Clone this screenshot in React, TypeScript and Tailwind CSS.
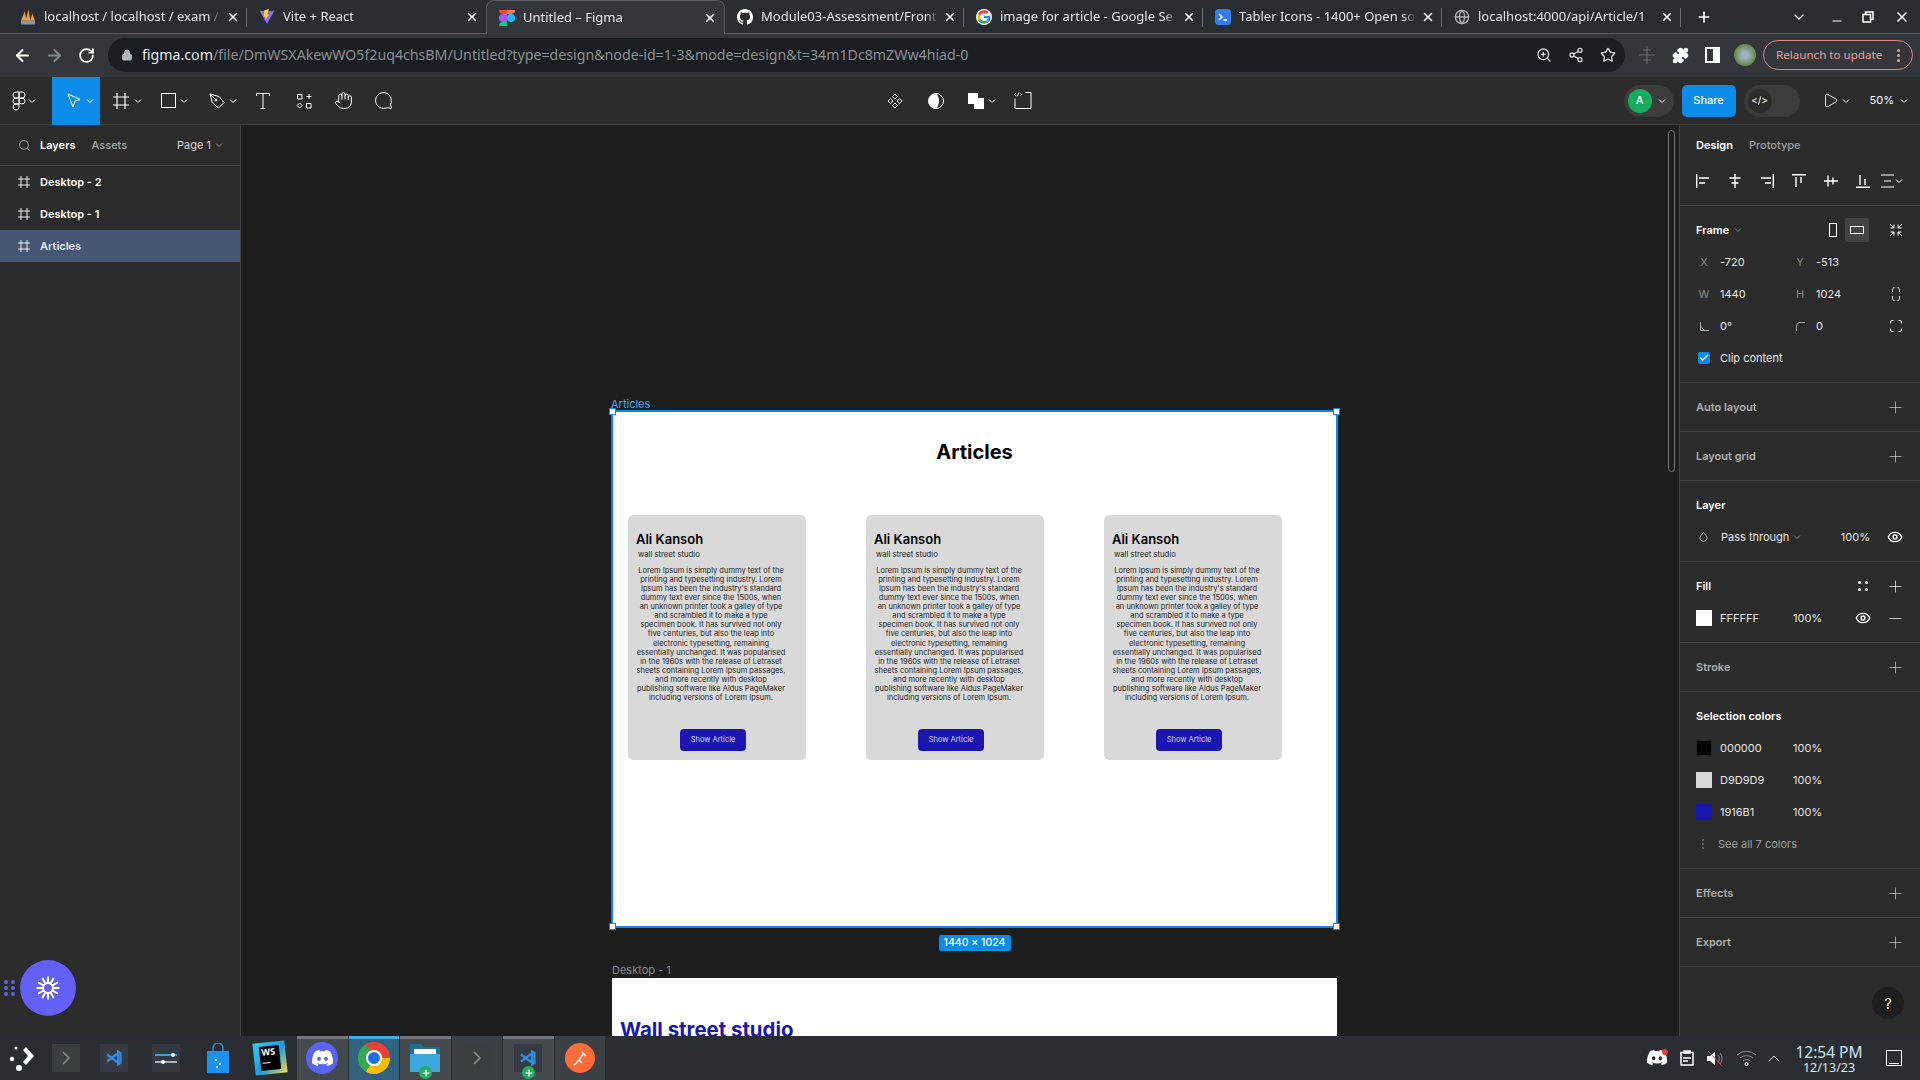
import React from 'react';
import { ArrowLeft, ArrowRight, RotateCw, Lock, ZoomIn, Share2, Star, Puzzle, Eye, Plus, Minus, Search, X, ChevronDown, Check, Globe, Hand, MessageCircle, Play } from 'lucide-react';

const inter = "font-['Inter',sans-serif]";

const Chev = ({ className = 'text-white' }: { className?: string }) => (
    <svg width="8" height="8" viewBox="0 0 8 8" fill="none" stroke="currentColor" className={className}><path d="M1 2.500l3 3 3-3" /></svg>
);

const FigmaLogo = () => (
    <svg width="16" height="24" viewBox="0 0 38 57">
        <path d="M19 28.500a9.500 9.500 0 1 1 19 0 9.500 9.500 0 0 1-19 0z" fill="#1ABCFE" />
        <path d="M0 47.500A9.500 9.500 0 0 1 9.500 38H19v9.500a9.500 9.500 0 1 1-19 0z" fill="#0ACF83" />
        <path d="M19 0v19h9.500a9.500 9.500 0 1 0 0-19H19z" fill="#FF7262" />
        <path d="M0 9.500A9.500 9.500 0 0 0 9.500 19H19V0H9.500A9.500 9.500 0 0 0 0 9.500z" fill="#F24E1E" />
        <path d="M0 28.500A9.500 9.500 0 0 0 9.500 38H19V19H9.500A9.500 9.500 0 0 0 0 28.500z" fill="#A259FF" />
    </svg>
);

const PmaIcon = () => (
    <svg width="17" height="18" viewBox="0 0 17 18">
        <path d="M1 13L5 3l2 10zM6 13l3-12 2 12zM11 13l2-8 3 8z" fill="#e9a23b" />
        <rect x="1" y="13" width="15" height="4" fill="#8a93a8" />
    </svg>
);

const ViteIcon = () => (
    <svg width="17" height="17" viewBox="0 0 17 17">
        <path d="M0.500 2L8.500 16.500 16.500 2 8.500 3.500z" fill="#8f6cf5" />
        <path d="M10.500 0.500L5.500 2l-.5 7 2-.5-.5 3.500L11 6l-2 .3z" fill="#ffd23f" />
    </svg>
);

const GithubIcon = () => (
    <svg width="16" height="16" viewBox="0 0 16 16" fill="#fff">
        <path d="M8 0C3.580 0 0 3.580 0 8c0 3.540 2.290 6.530 5.470 7.590.4.070.55-.17.550-.38 0-.19-.01-.82-.01-1.490-2.010.37-2.530-.49-2.690-.94-.09-.23-.48-.94-.82-1.130-.28-.15-.68-.52-.01-.53.63-.01 1.080.58 1.230.82.72 1.210 1.870.87 2.330.66.070-.52.28-.87.51-1.070-1.780-.2-3.640-.89-3.640-3.950 0-.87.31-1.590.82-2.150-.08-.2-.36-1.020.08-2.120 0 0 .67-.21 2.200.82.64-.18 1.320-.27 2-.27s1.360.09 2 .27c1.530-1.040 2.200-.82 2.200-.82.44 1.100.16 1.920.08 2.120.51.560.82 1.270.82 2.150 0 3.070-1.870 3.750-3.650 3.950.29.250.54.730.54 1.480 0 1.070-.01 1.930-.01 2.200 0 .21.150.46.550.38A8.010 8.010 0 0 0 16 8c0-4.420-3.580-8-8-8z" />
    </svg>
);

const GoogleIcon = () => (
    <svg width="16" height="16" viewBox="0 0 48 48">
        <path fill="#fff" d="M24 0a24 24 0 1 0 0 48 24 24 0 0 0 0-48z" />
        <path fill="#EA4335" d="M24 12c3.200 0 5.900 1.100 8 3l6-6C34.400 5.700 29.600 4 24 4 16.200 4 9.500 8.500 6.200 15l7 5.400C14.800 15.500 19 12 24 12z" />
        <path fill="#4285F4" d="M43.500 24.500c0-1.500-.1-2.900-.4-4.500H24v8h11c-.5 2.700-2 4.800-4.300 6.300l6.800 5.300c4-3.700 6-9.100 6-14.800z" />
        <path fill="#FBBC05" d="M13.200 28.400a12 12 0 0 1 0-8L6.200 15a20 20 0 0 0 0 18z" />
        <path fill="#34A853" d="M24 44c5.500 0 10-1.800 13.500-4.500l-6.800-5.300c-1.800 1.300-4 2-6.700 2-5 0-9.200-3.400-10.800-7.800l-7 5.400C9.500 39.500 16.200 44 24 44z" />
    </svg>
);

const TablerIcon = () => (
    <svg width="16" height="16" viewBox="0 0 16 16">
        <rect width="16" height="16" rx="3.500" fill="#2d7ff0" />
        <path d="M4 5l3 3-3 3" stroke="#fff" strokeWidth="1.500" fill="none" />
        <path d="M8.500 11h3.500" stroke="#fff" strokeWidth="1.500" />
    </svg>
);

const tabs = [
    { title: 'localhost / localhost / exam /', icon: <PmaIcon /> },
    { title: 'Vite + React', icon: <ViteIcon /> },
    { title: 'Untitled – Figma', icon: <FigmaLogo />, active: true },
    { title: 'Module03-Assessment/Front', icon: <GithubIcon /> },
    { title: 'image for article - Google Se', icon: <GoogleIcon /> },
    { title: 'Tabler Icons - 1400+ Open so', icon: <TablerIcon /> },
    { title: 'localhost:4000/api/Article/1', icon: <Globe size={16} className="text-[#aeb1b5]" /> },
];

const TabStrip = () => (
    <div className="flex h-[34px] items-end border-b border-[#5a5d61] bg-[#2a2d32] pl-2 text-[13px] text-[#e4e6e8]">
        {tabs.map((t, i) => (
            <div
                key={t.title}
                className={`relative flex h-[33px] w-[239px] shrink-0 items-center pl-3 pr-[7px] ${t.active ? '-mb-px h-[34px] rounded-t-lg border border-b-0 border-[#5a5d61] bg-[#33363b]' : ''}`}
            >
                <span className="flex h-4 w-4 shrink-0 items-center justify-center overflow-hidden">{t.icon}</span>
                <span className="ml-2 flex-1 whitespace-nowrap [mask-image:linear-gradient(to_right,black_93%,transparent)]">{t.title}</span>
                <X size={14} strokeWidth={2.500} className="ml-[5px] shrink-0 text-white" />
                {!t.active && i !== 1 && <span className="absolute top-2 right-0 h-[19px] w-px bg-[#6b6e72]" />}
            </div>
        ))}
        <div className="flex h-[33px] flex-1 items-center">
            <Plus size={16} strokeWidth={2.500} className="ml-[15px] text-white" />
            <ChevronDown size={16} strokeWidth={2} className="ml-[79px] text-white" />
            <Minus size={14} strokeWidth={2} className="ml-[23px] mt-2 text-white" />
            <svg width="12" height="12" viewBox="0 0 12 12" fill="none" stroke="#fff" strokeWidth="1.500" className="ml-[18px]"><path d="M3.500 3V1h7.500v7.500H9M1 3.500h7.500V11H1z" /></svg>
            <X size={16} strokeWidth={2.500} className="ml-[20px] text-white" />
        </div>
    </div>
);

const AddressBar = () => (
    <div className="flex h-[43px] items-center bg-[#33363b] pb-px">
        <ArrowLeft size={19} strokeWidth={2.500} className="ml-[13px] text-white" />
        <ArrowRight size={19} strokeWidth={2.500} className="ml-[13px] text-[#85888c]" />
        <RotateCw size={17} strokeWidth={2.500} className="ml-[14px] text-white" />
        <div className="ml-[13px] flex h-[34px] w-[1517px] items-center rounded-full bg-[#1b1e22] pl-[13px] pr-[9px] text-[14.200px]">
            <Lock size={12} className="fill-[#b3b5b8] text-[#b3b5b8]" />
            <span className="ml-[9px] text-[#e8eaed]">figma.com</span>
            <span className="text-[#8d9094]">/file/DmWSXAkewWO5f2uq4chsBM/Untitled?type=design&amp;node-id=1-3&amp;mode=design&amp;t=34m1Dc8mZWw4hiad-0</span>
            <div className="ml-auto flex items-center gap-[16px] text-[#d4d6d9]">
                <ZoomIn size={16} />
                <Share2 size={16} />
                <Star size={16} />
            </div>
        </div>
        <svg width="16" height="18" viewBox="0 0 16 18" fill="none" stroke="#6d7074" className="ml-[14px]"><path d="M8 0v18M0 9h16M4 4h8M4 14h8" /></svg>
        <Puzzle size={17} className="ml-[17px] fill-white text-white" />
        <span className="ml-[16px] h-[16px] w-[15px] border-2 border-r-[7px] border-white" />
        <span className="ml-[14px] h-[22px] w-[22px] rounded-full bg-[radial-gradient(circle,#9eb2c4_20%,#5f8a42_70%)]" />
        <div className="ml-[7px] flex h-[30px] w-[150px] items-center whitespace-nowrap rounded-full border border-[#d98a80] pl-[12px] pr-[12px] text-[11.600px] text-[#f0a096]">
            Relaunch to update
            <span className="ml-auto flex flex-col gap-[2px]">
                <i className="h-[3px] w-[3px] rounded-full bg-[#f0a096]" />
                <i className="h-[3px] w-[3px] rounded-full bg-[#f0a096]" />
                <i className="h-[3px] w-[3px] rounded-full bg-[#f0a096]" />
            </span>
        </div>
    </div>
);

const FrameIcon = ({ size = 16 }: { size?: number }) => (
    <svg width={size} height={size} viewBox="0 0 16 16" fill="none" stroke="#fff" strokeWidth="1.200"><path d="M4 0v16M12 0v16M0 4h16M0 12h16" /></svg>
);

const Toolbar = () => (
    <div className={`flex h-12 items-center border-b border-[#444] bg-[#2c2c2c] text-white ${inter}`}>
        <div className="flex w-[52px] items-center pl-[12px]">
            <svg width="14" height="20" viewBox="0 0 14 20" fill="none" stroke="#fff"><path d="M7 1H4a3 3 0 0 0 0 6h3zM7 1h3a3 3 0 0 1 0 6H7zM7 7H4a3 3 0 0 0 0 6h3zM7 10a3 3 0 1 0 6 0 3 3 0 0 0-6 0zM7 13H4a3 3 0 1 0 3 3z" /></svg>
            <Chev className="ml-[2px] text-white" />
        </div>
        <div className="flex h-12 w-12 items-center bg-[#0c8ce9] pl-[15px]">
            <svg width="14" height="16" viewBox="0 0 14 16" fill="none" stroke="#fff"><path d="M1 1l12 5.500-5 1.500-2 6z" /></svg>
            <Chev className="ml-[5px] text-white" />
        </div>
        <div className="ml-[13px] flex items-center"><FrameIcon /><Chev className="ml-[5px]" /></div>
        <div className="ml-[19px] flex items-center"><span className="h-[15px] w-[15px] border border-white" /><Chev className="ml-[4px]" /></div>
        <div className="ml-[21px] flex items-center">
            <svg width="16" height="16" viewBox="0 0 16 16" fill="none" stroke="#fff"><path d="M1 1l9 2.500 5 6-5.500 5.500-6-5zM1 1l5.500 5.500" /><circle cx="7" cy="7" r="1" /></svg>
            <Chev className="ml-[4px]" />
        </div>
        <svg width="14" height="16" viewBox="0 0 14 16" fill="none" stroke="#fff" className="ml-[19px]"><path d="M.5 3V.5h13V3M7 .5v15M4.500 15.500h5" /></svg>
        <svg width="16" height="16" viewBox="0 0 16 16" fill="none" stroke="#fff" className="ml-[26px]"><path d="M1.500 1.500h4.500v4.500H1.500zM10.500 3.500h5M13 1v5M3.700 10l2.500 2.500-2.500 2.500-2.500-2.500zM10.500 10.500h4.500v4.500h-4.500z" /></svg>
        <Hand size={19} strokeWidth={1.250} className="ml-[22px]" />
        <MessageCircle size={19} strokeWidth={1.250} className="ml-[21px] -scale-x-100" />
        <svg width="16" height="16" viewBox="0 0 16 16" fill="none" stroke="#fff" className="ml-[494px]"><path d="M8 1l2.500 2.500L8 6 5.500 3.500zM8 10l2.500 2.500L8 15l-2.500-2.500zM3.500 5.500L6 8l-2.500 2.500L1 8zM12.500 5.500L15 8l-2.500 2.500L10 8z" /></svg>
        <svg width="16" height="16" viewBox="0 0 16 16" className="ml-[25px]"><circle cx="8" cy="8" r="7.500" fill="none" stroke="#fff" /><path d="M8 .5a7.500 7.500 0 0 0 0 15c2-2 3-4.500 3-7.500S10 2.500 8 .5z" fill="#fff" /></svg>
        <svg width="16" height="16" viewBox="0 0 16 16" fill="#fff" className="ml-[24px]"><path d="M0 0h10v5h6v11H6v-5H0z" /></svg>
        <Chev className="ml-[4px]" />
        <svg width="18" height="19" viewBox="0 0 18 19" fill="none" stroke="#fff" className="ml-[18px]"><path d="M11.500 1.500H17v16H1v-10" /><path d="M1 3l-1 1 1 1M6 3l1 1-1 1M4.500 2L2.500 6" transform="translate(.5 -.5)" /></svg>
        <div className="ml-auto mr-[8px] flex h-8 w-[50px] items-center rounded-full bg-[#3c3c3c] pl-1">
            <span className="flex h-6 w-6 items-center justify-center rounded-full bg-[#14ae5c] text-[11px] font-medium">A</span>
            <Chev className="ml-[6px]" />
        </div>
        <div className="flex h-8 w-[54px] items-center justify-center rounded-[5px] bg-[#0c8ce9] text-[11px] font-medium">Share</div>
        <div className="ml-2 flex h-8 w-14 items-center rounded-full bg-[#3c3c3c] pl-1">
            <span className="flex h-6 w-6 items-center justify-center rounded-full bg-[#2c2c2c] text-[10px]">&lt;/&gt;</span>
        </div>
        <Play size={17} strokeWidth={1.250} className="ml-[22px]" />
        <Chev className="ml-[3px]" />
        <span className="ml-[20px] text-[11px]">50%</span>
        <Chev className="ml-[6px] mr-[12px]" />
    </div>
);

const LeftPanel = () => (
    <aside className={`relative flex w-[241px] shrink-0 flex-col border-r border-[#444] bg-[#2c2c2c] text-[11px] text-white ${inter}`}>
        <div className="flex h-[41px] shrink-0 items-center border-b border-[#444] pl-[18px] pr-[17px]">
            <Search size={13} className="text-[#8c8c8c]" />
            <span className="ml-[9px] font-semibold">Layers</span>
            <span className="ml-[16px] font-medium text-[#a8a8a8]">Assets</span>
            <span className="ml-auto text-[#d6d6d6]">Page 1</span>
            <Chev className="ml-1 text-[#999]" />
        </div>
        {['Desktop - 2', 'Desktop - 1', 'Articles'].map((name) => (
            <div key={name} className={`flex h-8 shrink-0 items-center pl-[18px] font-semibold ${name === 'Articles' ? 'bg-[#465775] text-[#e6ebf2]' : ''}`}>
                <FrameIcon size={12} />
                <span className="ml-[10px]">{name}</span>
            </div>
        ))}
        <div className="absolute top-[855px] left-[4px] grid grid-cols-2 gap-x-[3px] gap-y-[2px]">
            {[0, 1, 2, 3, 4, 5].map((d) => <i key={d} className="h-1 w-1 rounded-full bg-[#6360f0]" />)}
        </div>
        <div className="absolute top-[835px] left-[20px] flex h-14 w-14 items-center justify-center rounded-full bg-[#6360f7]">
            <svg width="24" height="24" viewBox="0 0 24 24" stroke="#fff" strokeWidth="2" fill="none">
                {[0, 30, 60, 90, 120, 150, 180, 210, 240, 270, 300, 330].map((a) => (
                    <path key={a} d="M12 0.500V7.500" transform={`rotate(${a} 12 12)`} />
                ))}
                <circle cx="12" cy="12" r="5" />
            </svg>
        </div>
    </aside>
);

const bodyLines = [
    'Lorem Ipsum is simply dummy text of the',
    'printing and typesetting industry. Lorem',
    "Ipsum has been the industry's standard",
    'dummy text ever since the 1500s, when',
    'an unknown printer took a galley of type',
    'and scrambled it to make a type',
    'specimen book. It has survived not only',
    'five centuries, but also the leap into',
    'electronic typesetting, remaining',
    'essentially unchanged. It was popularised',
    'in the 1960s with the release of Letraset',
    'sheets containing Lorem Ipsum passages,',
    'and more recently with desktop',
    'publishing software like Aldus PageMaker',
    'including versions of Lorem Ipsum.',
];

const ArticleCard = () => (
    <div className="flex h-[245px] w-[178px] shrink-0 flex-col rounded-[5px] bg-[#d9d9d9] pl-2 text-black">
        <div className="mt-[15px] text-[13px] font-semibold leading-[18px]">Ali Kansoh</div>
        <div className="mt-[1px] pl-[2px] text-[7.700px] leading-[12px] text-[#222]">wall street studio</div>
        <div className="mt-[5px] w-[150px] text-center text-[7.500px] leading-[9.060px] whitespace-nowrap text-[#222]">
            {bodyLines.map((line) => <div key={line}>{line}</div>)}
        </div>
        <div className="mt-auto mb-[9px] ml-[44px] flex h-[22px] w-[66px] items-center justify-center rounded-[4px] bg-[#1916b1] pb-px text-[7.500px] text-[#d8d8f5]">Show Article</div>
    </div>
);

const Handle = ({ className }: { className: string }) => (
    <span className={`absolute h-[7px] w-[7px] border border-[#0c8ce9] bg-white ${className}`} />
);

const Canvas = () => (
    <main className={`relative flex min-w-0 flex-1 flex-col overflow-hidden bg-[#1e1e1e] pl-[370px] ${inter}`}>
        <div className="mt-[272px] h-[13px] text-[11px] leading-[14px] text-[#4da6e8]">Articles</div>
        <section className="relative h-[518px] w-[727px] shrink-0 border-2 border-[#0c8ce9] bg-white">
            <div className="mt-[26px] text-center text-[20px] font-bold leading-[28px] text-black">Articles</div>
            <div className="mt-[49px] flex gap-[60px] pl-[15px]">
                <ArticleCard />
                <ArticleCard />
                <ArticleCard />
            </div>
            <Handle className="-top-[4px] -left-[4px]" />
            <Handle className="-top-[4px] -right-[4px]" />
            <Handle className="-bottom-[4px] -left-[4px]" />
            <Handle className="-right-[4px] -bottom-[4px]" />
        </section>
        <div className="mt-[7px] flex h-[16px] w-[727px] shrink-0 justify-center">
            <span className="h-[16px] w-[72px] rounded-[2px] bg-[#0c8ce9] text-center text-[10.500px] leading-[16px] font-medium text-white">1440 × 1024</span>
        </div>
        <div className="mt-[12px] h-[15px] pl-px text-[11px] leading-[15px] text-[#8c8c8c]">Desktop - 1</div>
        <section className="ml-px h-[100px] w-[725px] shrink-0 bg-white pl-[8px] pt-[38px]">
            <div className="text-[20.400px] leading-[28px] font-bold text-[#1916b1]">Wall street studio</div>
        </section>
        <span className="absolute top-[5px] right-[4px] h-[342px] w-[7px] rounded-[4px] border border-[#777] bg-[#1e1e1e]" />
    </main>
);

const PanelPlus = ({ className }: { className: string }) => <Plus size={19} strokeWidth={0.900} className={className} />;

const Section = ({ title }: { title: string }) => (
    <div className="border-b border-[#444]">
        <div className="my-2 flex h-8 items-center justify-between pl-4 pr-[15px]">
            <span className="font-semibold text-[#b0b0b0]">{title}</span>
            <PanelPlus className="text-[#d0d0d0]" />
        </div>
    </div>
);

const AlignIcon = ({ d }: { d: string }) => (
    <span className="flex w-8 justify-center">
        <svg width="14" height="14" viewBox="0 0 14 14" fill="none" stroke="#fff" strokeWidth="1.400"><path d={d} /></svg>
    </span>
);

const Prop = ({ label, value }: { label: React.ReactNode; value: string }) => (
    <div className="flex items-center">
        <span className="w-6 text-center text-[#8c8c8c]">{label}</span>
        <span className="ml-1">{value}</span>
    </div>
);

const ColorRow = ({ color, value, border }: { color: string; value: string; border?: string }) => (
    <div className="flex h-8 items-center pl-4">
        <span className={`h-4 w-4 ${border ?? ''}`} style={{ backgroundColor: color }} />
        <span className="ml-2 w-[73px] text-[#e6e6e6]">{value}</span>
        <span className="text-[#e6e6e6]">100%</span>
    </div>
);

const RightPanel = () => (
    <aside className={`relative w-[241px] shrink-0 border-l border-[#444] bg-[#2c2c2c] text-[11px] text-[#e6e6e6] ${inter}`}>
        <div className="h-[81px] border-b border-[#444]">
            <div className="flex h-10 items-center pl-4">
                <span className="font-semibold text-white">Design</span>
                <span className="ml-4 font-medium text-[#a0a0a0]">Prototype</span>
            </div>
            <div className="flex h-[32px] items-center pl-[7px]">
                <AlignIcon d="M.7 0v14M3 4h10M3 9h6" />
                <AlignIcon d="M7 0v14M1.500 4h11M3.500 9h7" />
                <AlignIcon d="M13.300 0v14M1 4h10M5 9h6" />
                <AlignIcon d="M0 .7h14M4 3v10M9 3v6" />
                <AlignIcon d="M0 7h14M4 1.500v11M9 3.500v7" />
                <AlignIcon d="M0 13.300h14M4 1v10M9 5v6" />
                <span className="ml-[2px] flex items-center">
                    <svg width="14" height="14" viewBox="0 0 14 14" fill="none" stroke="#fff" strokeWidth="1.200"><path d="M0 1h13M0 13h13M3 7h7" /></svg>
                    <Chev className="text-white" />
                </span>
            </div>
        </div>
        <div className="h-[177px] border-b border-[#444]">
            <div className="-mb-2 flex h-[48px] items-center pl-4 pr-[17px]">
                <span className="font-semibold text-white">Frame</span>
                <Chev className="ml-[5px] text-[#8c8c8c]" />
                <span className="ml-auto mr-[8px] h-[14px] w-[8px] border border-white" />
                <span className="flex h-6 w-6 items-center justify-center rounded-[2px] bg-[#444]"><span className="h-[8px] w-[14px] border border-white" /></span>
                <svg width="14" height="14" viewBox="0 0 14 14" fill="none" stroke="#fff" className="ml-[20px]"><path d="M1 1l4 4M5 1.500V5H1.500M13 1L9 5M9 1.500V5h3.500M1 13l4-4M5 12.500V9H1.500M13 13L9 9M9 12.500V9h3.500" /></svg>
            </div>
            <div className="grid grid-cols-[96px_96px_24px] pl-3">
                <div className="flex h-8 items-center"><Prop label="X" value="-720" /></div>
                <div className="flex h-8 items-center"><Prop label="Y" value="-513" /></div>
                <div />
                <div className="flex h-8 items-center"><Prop label="W" value="1440" /></div>
                <div className="flex h-8 items-center"><Prop label="H" value="1024" /></div>
                <div className="flex h-8 items-center justify-center">
                    <svg width="8" height="14" viewBox="0 0 8 14" fill="none" stroke="#ddd"><path d="M.5 5V3a3.500 3.500 0 0 1 7 0v2M.5 9v2a3.500 3.500 0 0 0 7 0V9" /></svg>
                </div>
                <div className="flex h-8 items-center"><Prop label={<svg width="9" height="9" viewBox="0 0 9 9" fill="none" stroke="#aaa" className="mx-auto"><path d="M.5 0v8.500H9M.5 4l4 4.500" /></svg>} value="0°" /></div>
                <div className="flex h-8 items-center"><Prop label={<svg width="9" height="9" viewBox="0 0 9 9" fill="none" stroke="#aaa" className="mx-auto"><path d="M.5 9V4A3.500 3.500 0 0 1 4 .5h5" /></svg>} value="0" /></div>
                <div className="flex h-8 items-center justify-center">
                    <svg width="12" height="12" viewBox="0 0 12 12" fill="none" stroke="#ddd"><path d="M.5 3.500V2A1.500 1.500 0 0 1 2 .5h1.500M8.500.5H10A1.500 1.500 0 0 1 11.500 2v1.500M11.500 8.500V10a1.500 1.500 0 0 1-1.500 1.500H8.500M3.500 11.500H2A1.500 1.500 0 0 1 .5 10V8.500" /></svg>
                </div>
            </div>
            <div className="flex h-8 items-center pl-[18px]">
                <span className="flex h-3 w-3 items-center justify-center rounded-[2px] bg-[#0c8ce9]"><Check size={10} strokeWidth={3} className="text-white" /></span>
                <span className="ml-[10px]">Clip content</span>
            </div>
        </div>
        <Section title="Auto layout" />
        <Section title="Layout grid" />
        <div className="h-[81px] border-b border-[#444]">
            <div className="-mb-2 flex h-[48px] items-center pl-4 font-semibold text-white">Layer</div>
            <div className="flex h-8 items-center pl-[19px] pr-[17px]">
                <svg width="9" height="11" viewBox="0 0 9 11" fill="none" stroke="#aaa"><path d="M4.500 .5l2.500 3a3.500 3.500 0 1 1-5 0z" /></svg>
                <span className="ml-[13px]">Pass through</span>
                <Chev className="ml-1 text-[#8c8c8c]" />
                <span className="ml-auto">100%</span>
                <Eye size={16} className="ml-[17px] text-white" />
            </div>
        </div>
        <div className="h-[81px] border-b border-[#444]">
            <div className="-mb-2 flex h-[48px] items-center pl-4 pr-[15px] font-semibold text-white">
                Fill
                <span className="ml-auto mr-[18px] grid grid-cols-2 gap-[4px]">
                    {[0, 1, 2, 3].map((d) => <i key={d} className="h-[3px] w-[3px] rounded-full bg-white" />)}
                </span>
                <PanelPlus className="text-white" />
            </div>
            <div className="flex h-8 items-center pl-4 pr-[15px]">
                <span className="h-4 w-4 bg-white" />
                <span className="ml-2 w-[73px]">FFFFFF</span>
                <span>100%</span>
                <Eye size={16} className="ml-auto mr-[15px] text-white" />
                <Minus size={19} strokeWidth={0.900} className="text-white" />
            </div>
        </div>
        <Section title="Stroke" />
        <div className="h-[177px] border-b border-[#444]">
            <div className="-mb-2 flex h-[48px] items-center pl-4 font-semibold text-white">Selection colors</div>
            <ColorRow color="#000000" value="000000" border="border border-[#222]" />
            <ColorRow color="#D9D9D9" value="D9D9D9" />
            <ColorRow color="#1916B1" value="1916B1" />
            <div className="flex h-8 items-center pl-[22px] text-[#a0a0a0]">
                <span className="flex flex-col gap-[2px]">
                    <i className="h-[2px] w-[2px] bg-[#666]" /><i className="h-[2px] w-[2px] bg-[#666]" /><i className="h-[2px] w-[2px] bg-[#666]" />
                </span>
                <span className="ml-[14px]">See all 7 colors</span>
            </div>
        </div>
        <Section title="Effects" />
        <Section title="Export" />
        <span className="absolute right-4 bottom-[17px] flex h-8 w-8 items-center justify-center rounded-full bg-[#1e1e1e] text-[14px] text-white">?</span>
    </aside>
);

const DiscordGlyph = ({ size }: { size: number }) => (
    <svg width={size} height={size * 0.76} viewBox="0 0 127 96" fill="#fff">
        <path d="M107.700 8A105 105 0 0 0 81.500 0c-1.100 2-2.400 4.800-3.300 7a97.700 97.700 0 0 0-29.100 0c-.9-2.200-2.300-5-3.400-7a105 105 0 0 0-26.200 8C3 32.700-1.500 56.800.7 80.500A105.700 105.700 0 0 0 32.800 96.700c2.600-3.500 4.900-7.200 6.900-11.100-3.800-1.400-7.400-3.200-10.900-5.200.9-.7 1.800-1.400 2.700-2.100a75.600 75.600 0 0 0 64.300 0c.9.700 1.800 1.400 2.700 2.100-3.500 2-7.100 3.800-10.900 5.200 2 3.900 4.300 7.600 6.900 11.100a105.300 105.300 0 0 0 32.200-16.200c2.600-27.500-4.500-51.300-18.900-72.500zM42.300 65.700c-6.300 0-11.400-5.700-11.400-12.800s5-12.800 11.400-12.800 11.500 5.800 11.400 12.800-5 12.800-11.400 12.800zm42.400 0c-6.300 0-11.400-5.700-11.400-12.800s5-12.800 11.400-12.800 11.500 5.800 11.400 12.800-5 12.800-11.400 12.800z" />
    </svg>
);

const TerminalTile = () => (
    <span className="flex h-7 w-7 items-center justify-center bg-[#3a403f]">
        <svg width="10" height="16" viewBox="0 0 10 16" fill="none" stroke="#8b9090" strokeWidth="1.500"><path d="M2 2l6 6-6 6" /></svg>
    </span>
);

const CodeTile = () => (
    <span className="flex h-7 w-7 items-center justify-center bg-[#353a44]">
        <svg width="18" height="16" viewBox="0 0 18 16" fill="none" stroke="#2f8fe0" strokeWidth="2.200"><path d="M2 4.500l10 7.500M2 11.500L12 4M13 1.500L15.500 3v10L13 14.500z" /></svg>
    </span>
);

const Dock = ({ tint, bar, badge, children }: { tint?: string; bar?: string; badge?: boolean; children: React.ReactNode }) => (
    <div className="relative flex h-11 w-[50.500px] shrink-0 items-center justify-center" style={{ backgroundColor: tint }}>
        {bar && <span className="absolute inset-x-0 top-0 h-[3px]" style={{ backgroundColor: bar }} />}
        {children}
        {badge && (
            <span className="absolute bottom-[1px] left-[19px] flex h-[13px] w-[13px] items-center justify-center rounded-full bg-[#27ae60]">
                <Plus size={10} strokeWidth={3} className="text-white" />
            </span>
        )}
    </div>
);

const Taskbar = () => (
    <footer className="flex h-11 items-center bg-[#2a2e32] font-['Noto_Sans',sans-serif] text-[#dbe6ef]">
        <svg width="26" height="28" viewBox="0 0 26 28" fill="#fff" className="ml-[9px]"><circle cx="7" cy="4" r="1.500" /><circle cx="3" cy="15" r="2.200" /><circle cx="10" cy="24" r="3" /><path d="M17 3l8 9-8 9-3-3 5-6-5-6z" /></svg>
        <span className="ml-[17px]"><TerminalTile /></span>
        <span className="ml-[20px]"><CodeTile /></span>
        <span className="ml-[24px] flex h-7 w-7 flex-col items-center justify-center gap-[5px] bg-[#353a40]">
            <span className="relative h-[2px] w-[22px] bg-[#3aa0e0]"><i className="absolute -top-[1px] right-[2px] h-1 w-1 rounded-full bg-white" /></span>
            <span className="relative h-[2px] w-[22px] bg-[#aab2b8]"><i className="absolute -top-[1px] left-[6px] h-1 w-1 rounded-full bg-white" /></span>
        </span>
        <svg width="24" height="30" viewBox="0 0 24 30" className="ml-[26px]"><path d="M1 8h22v22H1z" fill="#1e90ef" /><path d="M7 10V5a5 5 0 0 1 10 0v5" fill="none" stroke="#1e90ef" strokeWidth="1.500" /><circle cx="10" cy="17" r="1" fill="#fff" /><circle cx="14" cy="21" r="1" fill="#fff" /><circle cx="11" cy="24" r="1" fill="#fff" /></svg>
        <span className="ml-[24px] flex h-8 w-8 rotate-[-6deg] items-center justify-center bg-[linear-gradient(135deg,#2ad0f0,#1f9be0_55%,#f5e050)]">
            <span className="flex h-6 w-5 flex-col bg-black pl-[2px] text-[9px] leading-[12px] font-bold text-white">WS<i className="mt-[4px] h-px w-2 bg-white" /></span>
        </span>
        <div className="ml-[11px] flex gap-[1px]">
            <Dock tint="#454a4f" bar="#74787c">
                <span className="flex h-8 w-8 items-center justify-center rounded-full bg-[#5865f2]"><DiscordGlyph size={21} /></span>
            </Dock>
            <Dock tint="#33637f" bar="#3daee9">
                <span className="flex h-8 w-8 items-center justify-center rounded-full bg-[conic-gradient(from_-30deg,#ea4335_0_120deg,#fbbc05_120deg_240deg,#34a853_240deg_360deg)]">
                    <span className="h-[16px] w-[16px] rounded-full border-[2px] border-white bg-[#1a73e8]" />
                </span>
            </Dock>
            <Dock tint="#454a4f" bar="#74787c" badge>
                <svg width="30" height="28" viewBox="0 0 30 28"><path d="M0 0h11l3 3h16v25H0z" fill="#1d6f9c" /><path d="M4 5h22v5H4z" fill="#fff" /><path d="M0 10h30v18H0z" fill="#3da8dc" /></svg>
            </Dock>
            <Dock tint="#3b4045"><TerminalTile /></Dock>
            <Dock tint="#454a4f" bar="#74787c" badge><CodeTile /></Dock>
            <Dock tint="#3b4045">
                <span className="flex h-[30px] w-[30px] items-center justify-center rounded-full bg-[#ff6c37]">
                    <svg width="18" height="18" viewBox="0 0 18 18" fill="none" stroke="#fff" strokeWidth="1.500"><path d="M3 16l5-5 5-7M8 11l3 3M11 3l4 4" /></svg>
                </span>
            </Dock>
        </div>
        <div className="ml-auto flex items-center pr-[18px]">
            <span className="relative"><DiscordGlyph size={20} /><i className="absolute -top-[1px] -right-[1px] h-[6px] w-[6px] rounded-full bg-[#e83b3b]" /></span>
            <svg width="14" height="16" viewBox="0 0 14 16" fill="none" stroke="#fff" strokeWidth="1.500" className="ml-[13px]"><path d="M1 2.500h12V15H1zM3 8h8M3 11h5" /><path d="M4 1h6v2H4z" fill="#fff" /></svg>
            <svg width="17" height="17" viewBox="0 0 17 17" className="ml-[13px]"><path d="M0 6h3l5-4v13l-5-4H0z" fill="#fff" /><path d="M11 5a5 5 0 0 1 0 7M13 3a8 8 0 0 1 0 11" fill="none" stroke="#888" /><path d="M1 1l14 15" stroke="#da4453" /></svg>
            <svg width="21" height="16" viewBox="0 0 21 16" fill="none" stroke="#8a8e92" className="ml-[12px]"><path d="M1 5a14 14 0 0 1 19 0M4 8a10 10 0 0 1 13 0M7 11a5 5 0 0 1 7 0" /><circle cx="10.500" cy="14" r="1.500" stroke="#fff" /></svg>
            <svg width="12" height="7" viewBox="0 0 12 7" fill="none" stroke="#dde" className="ml-[11px]"><path d="M.5 6.500L6 1l5.500 5.500" /></svg>
            <div className="ml-[14px] flex w-[70px] flex-col items-center pt-px">
                <span className="whitespace-nowrap text-[15.500px] leading-[18px] text-[#cfe3f2]">12:54 PM</span>
                <span className="whitespace-nowrap text-[12.500px] leading-[14px]">12/13/23</span>
            </div>
            <span className="relative ml-[22px] h-4 w-4 border border-white after:absolute after:inset-x-[2px] after:bottom-[1px] after:h-px after:bg-white" />
        </div>
    </footer>
);

export default function App() {
    return (
        <div className="flex h-[1080px] w-[1920px] flex-col overflow-hidden bg-[#1e1e1e] font-['Noto_Sans',sans-serif]">
            <TabStrip />
            <AddressBar />
            <Toolbar />
            <div className="flex min-h-0 flex-1">
                <LeftPanel />
                <Canvas />
                <RightPanel />
            </div>
            <Taskbar />
        </div>
    );
}
